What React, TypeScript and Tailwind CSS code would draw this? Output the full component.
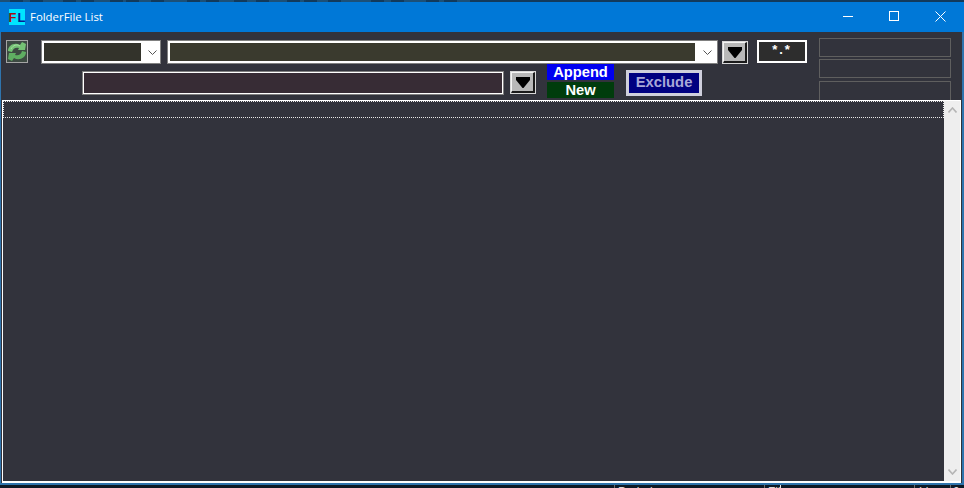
import React from 'react';

const font = { fontFamily: '"Liberation Sans", Arial, sans-serif' };

// specks of the window behind this one, left visible above the title bar
const topTicks = [30, 22, 60, 14, 48, 9, 36, 70, 18, 44, 26, 55, 12, 33, 90, 20, 66, 15, 40];

// the small chevron inside the white part of the combo boxes
const Chevron = () => (
  <svg width="9" height="5" viewBox="0 0 9 5" fill="none" stroke="#555" strokeWidth="1">
    <path d="M0.5 0.5 L4.5 4.5 L8.5 0.5" />
  </svg>
);

const ArrowButton = () => (
  <div className="h-[23px] w-[26px] border border-[#d8d8d8] bg-[#b8b8b8]">
    <div className="flex h-full w-full items-center justify-center border-t border-r-2 border-b-2 border-l border-t-[#f4f4f4] border-r-[#1a1a1a] border-b-[#1a1a1a] border-l-[#f4f4f4]">
      <svg width="14" height="11" viewBox="0 0 14 11">
        <path d="M0 0 H14 V3 L7.5 11 H6.5 L0 3 Z" fill="#000" />
      </svg>
    </div>
  </div>
);

const RefreshIcon = () => (
  <div className="flex h-[23px] w-[22px] items-center justify-center border border-[#a5a5a5] bg-[#3d4a42]">
    <svg width="20" height="21" viewBox="0 0 20 21">
      <path d="M1 10 C1 4 8 1 13 4 L15 1 L19 3 L18 9 L11 9 L12 7 C9 6 6 7 5 11 Z" fill="#74c274" />
      <path d="M19 11 C19 17 12 20 7 17 L5 20 L1 18 L2 12 L9 12 L8 14 C11 15 14 14 15 10 Z" fill="#5fae62" />
      <path d="M4 8 C6 4 10 3 13 5" stroke="#a8e0a4" strokeWidth="1" fill="none" />
    </svg>
  </div>
);

const InfoBox = () => <div className="h-[19px] w-[132px] shrink-0 border border-[#5f5f5f]" />;

export default function App() {
  return (
    <div className="flex h-[488px] w-[964px] flex-col overflow-hidden bg-[#0e1a26]" style={font}>
      <div className="flex h-[2px] gap-[13px] bg-[#123a5c]">
        {topTicks.map((w, i) => (
          <div key={i} className="h-full bg-[#1c5078]" style={{ width: w / 3 }} />
        ))}
      </div>

      {/* title bar */}
      <div className="flex h-[30px] items-center bg-[#0078d7] pl-[9px] text-white">
        <div className="flex h-[16px] w-[16px] items-center justify-center gap-px bg-[#00e5ff] text-[13px] leading-none font-bold">
          <span className="text-[#a01010]">F</span>
          <span className="text-[#0a1a90]">L</span>
        </div>
        <span className="ml-[5px] text-[11.4px]" style={{ fontFamily: '"Open Sans", sans-serif' }}>
          FolderFile List
        </span>
        <div className="ml-auto flex h-full items-center pr-px pb-[2px]">
          <div className="flex w-[46px] justify-center">
            <div className="h-px w-[10px] bg-white" />
          </div>
          <div className="flex w-[46px] justify-center">
            <div className="h-[10px] w-[10px] border border-white" />
          </div>
          <div className="flex w-[46px] justify-center">
            <svg width="11" height="11" viewBox="0 0 11 11" stroke="#fff" strokeWidth="1">
              <path d="M0.5 0.5 L10.5 10.5 M10.5 0.5 L0.5 10.5" />
            </svg>
          </div>
        </div>
      </div>

      {/* window body */}
      <div className="flex h-[451px] flex-col border-l border-r-2 border-[#2f74ad] bg-[#32333c]">
        <div className="flex h-[68px] overflow-hidden">
          <div className="w-[817px] shrink-0 pl-[5px]">
            <div className="mt-[8px] flex h-[24px] items-start">
              <RefreshIcon />
              <div className="ml-[13px] flex h-[24px] w-[120px] items-center border border-[#808080] bg-white">
                <div className="ml-[2px] h-[18px] w-[97px] bg-[#33332b]" />
                <div className="flex flex-1 items-center justify-center pt-px pl-[3px]">
                  <Chevron />
                </div>
              </div>
              <div className="ml-[6px] flex h-[24px] w-[551px] items-center border border-[#808080] bg-white">
                <div className="ml-px h-[20px] w-[527px] border border-white bg-[#3a3a2e]" />
                <div className="flex flex-1 items-center justify-center pt-px pl-px">
                  <Chevron />
                </div>
              </div>
              <div className="mt-px ml-[4px]">
                <ArrowButton />
              </div>
              <div className="ml-[9px] flex h-[23px] w-[50px] justify-center border-2 border-white bg-[#2d2d2d] text-[13px] leading-[16px] font-bold tracking-[2px] text-white">
                *.*
              </div>
            </div>
            <div className="flex h-[36px] items-start">
              <div className="mt-[7px] ml-[76px] h-[24px] w-[422px] border border-[#808080]">
                <div className="h-full w-full border border-white bg-[#372c35]" />
              </div>
              <div className="mt-[7px] ml-[6px]">
                <ArrowButton />
              </div>
              <div className="ml-[11px] flex w-[67px] flex-col text-center text-[14.7px] leading-[16px] font-bold text-white">
                <div className="h-[16px] bg-[#0000f0]">Append</div>
                <div className="mt-[2px] h-[16px] bg-[#003c0c]">New</div>
              </div>
              <div className="mt-[6px] ml-[12px] flex h-[26px] w-[76px] items-center justify-center border-[3px] border-[#cfcfdc] bg-[#000080] pb-px text-[14.8px] font-bold text-[#a8a8d8]">
                Exclude
              </div>
            </div>
          </div>
          <div className="flex flex-col gap-[2px] pt-[6px] pl-px">
            <InfoBox />
            <InfoBox />
            <div className="mt-[1px] h-[30px] w-[132px] shrink-0 border border-[#5f5f5f]" />
          </div>
        </div>

        {/* list */}
        <div className="ml-px flex h-[383px] w-[959px] border-t border-r border-b-2 border-l border-white">
          <div className="min-w-0 flex-1">
            <div className="h-[17px] border border-dotted border-[#e8e8e8]" />
          </div>
          <div className="flex w-[16px] flex-col items-center justify-between bg-[#eeeeee] py-[6px]">
            <svg width="9" height="6" viewBox="0 0 9 6" fill="none" stroke="#b5b5b5" strokeWidth="1.6">
              <path d="M0.5 5.5 L4.5 1 L8.5 5.5" />
            </svg>
            <svg width="9" height="6" viewBox="0 0 9 6" fill="none" stroke="#b5b5b5" strokeWidth="1.6">
              <path d="M0.5 0.5 L4.5 5 L8.5 0.5" />
            </svg>
          </div>
        </div>
      </div>

      <div className="h-[2px] bg-[#2f74ad]" />

      {/* status bar, cut off by the bottom of the screen */}
      <div className="relative flex-1 overflow-hidden text-[12px] leading-[12px] text-[#d8d8d8]">
        <div className="absolute top-0 left-[614px] h-full w-px bg-[#6a6a6a]" />
        <div className="absolute top-[1px] left-[618px]">Period</div>
        <div className="absolute top-0 left-[764px] h-full w-px bg-[#6a6a6a]" />
        <div className="absolute top-[1px] left-[768px]">Files</div>
        <div className="absolute top-0 left-[780px] h-full w-px bg-[#e8e8e8]" />
        <div className="absolute top-0 left-[914px] h-full w-px bg-[#6a6a6a]" />
        <div className="absolute top-[1px] left-[919px]">Lines</div>
        <div className="absolute top-0 left-[950px] h-full w-px bg-[#6a6a6a]" />
        <div className="absolute top-[1px] left-[953px]">0</div>
      </div>
    </div>
  );
}
